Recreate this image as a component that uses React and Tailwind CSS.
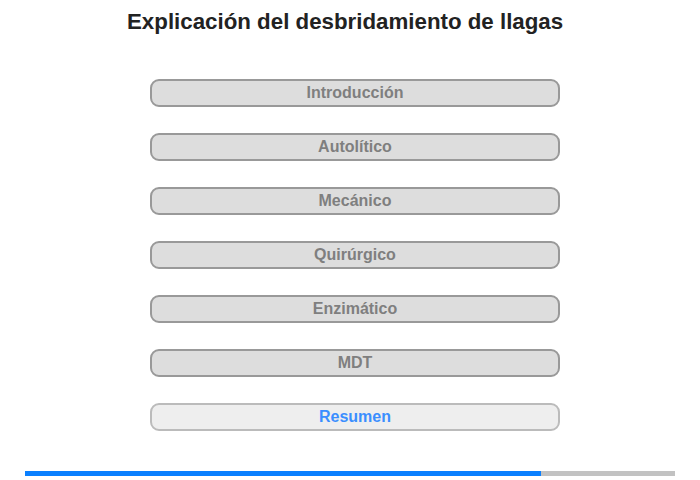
import React from "react";

const sections = ["Introducción", "Autolítico", "Mecánico", "Quirúrgico", "Enzimático", "MDT"];

const App = () => {
  return (
    <div className="w-[700px] h-[480px] bg-white flex flex-col font-['Liberation_Sans',Arial,sans-serif]">
      {/* Title */}
      <h1 className="pt-[9px] h-[79px] pl-[127px] text-[22.3px] leading-[26px] font-bold text-[#222]">
        Explicación del desbridamiento de llagas
      </h1>

      {/* Menu */}
      <div className="ml-[150px] w-[410px] flex flex-col gap-[26px]">
        {sections.map((s) => (
          <button
            key={s}
            className="h-[28px] rounded-[9px] border-2 border-[#999] bg-[#ddd] text-[16px] font-bold text-[#7f7f7f] leading-none"
          >
            {s}
          </button>
        ))}
        <button className="h-[28px] rounded-[9px] border-2 border-[#bbb] bg-[#eee] text-[16px] font-bold text-[#3b8eff] leading-none">
          Resumen
        </button>
      </div>

      {/* Progress */}
      <div className="mt-[40px] mx-[25px] h-[5px] bg-[#c2c2c2] flex">
        <div className="w-[516px] h-full bg-[#0a80ff]" />
      </div>
    </div>
  );
};

export default App;
